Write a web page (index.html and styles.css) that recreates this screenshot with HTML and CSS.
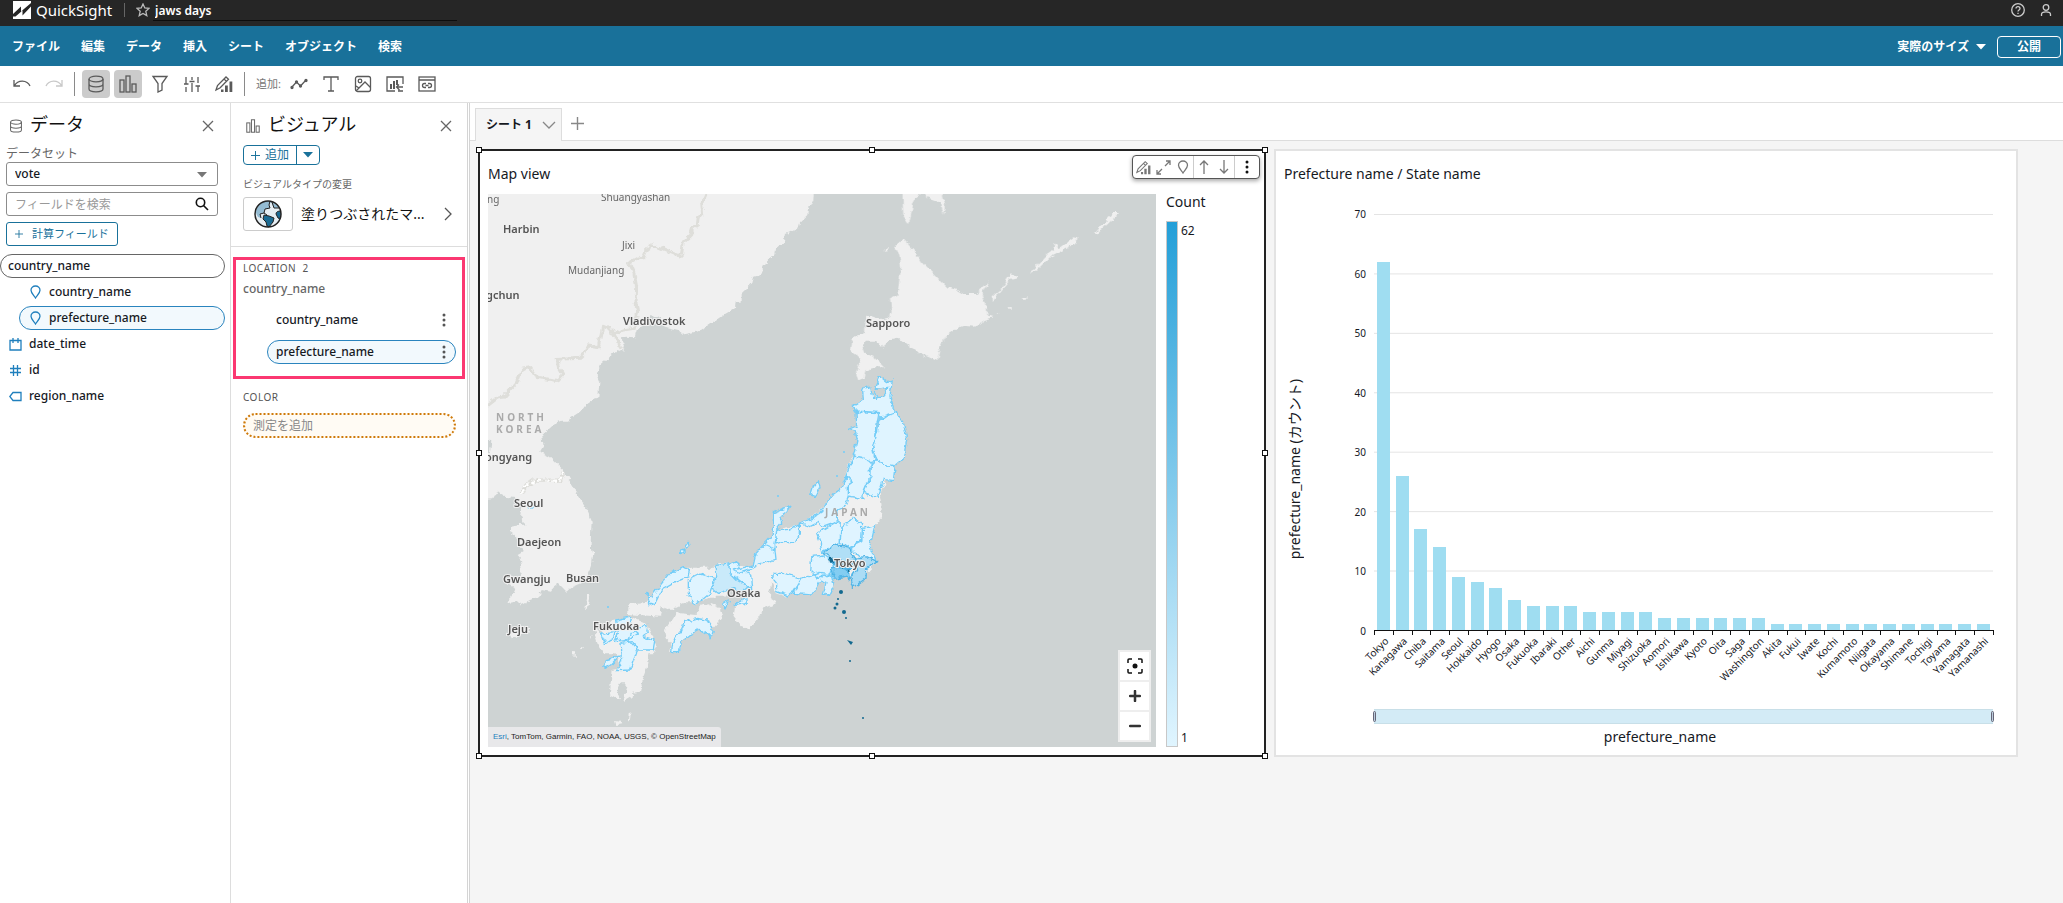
FILE: index.html
```html
<!DOCTYPE html>
<html lang="ja">
<head>
<meta charset="utf-8">
<meta name="viewport" content="width=device-width, initial-scale=1">
<title>QuickSight - jaws days</title>
<link rel="stylesheet" href="styles.css">
</head>
<body>
<svg class="defs" aria-hidden="true">
  <symbol id="i-db" viewBox="0 0 18 18"><ellipse cx="9" cy="4" rx="7" ry="2.8"/><path d="M2 4v10c0 1.500 3 2.800 7 2.800s7-1.300 7-2.800V4M2 9c0 1.500 3 2.800 7 2.800S16 10.500 16 9"/></symbol>
  <symbol id="i-bars" viewBox="0 0 18 18"><rect x="1" y="5" width="4" height="12"/><rect x="7" y="1" width="4" height="16"/><rect x="13" y="9" width="4" height="8"/></symbol>
  <symbol id="i-pencil" viewBox="0 0 18 18"><path d="M1 15l1.500-4.500L11 2l2.500 2.300-8.300 8.500zM9 4l2.500 2.400"/><path d="M6 14.500h2.500V17H6zM10 10.500h2.800V17H10zM14.500 6.500h2.800V17h-2.800z" fill="currentColor" stroke="none"/></symbol>
  <symbol id="i-pin" viewBox="0 0 12 14"><path d="M6 13C4.500 10.500 1.500 8 1.500 5.200a4.500 4.200 0 0 1 9 0C10.500 8 7.500 10.500 6 13z"/></symbol>
  <symbol id="i-close" viewBox="0 0 12 12"><path d="M1 1l10 10M11 1L1 11"/></symbol>
  <symbol id="i-plus" viewBox="0 0 12 12"><path d="M6 0v12M0 6h12"/></symbol>
  <symbol id="i-dots" viewBox="0 0 4 14"><g fill="currentColor" stroke="none"><circle cx="2" cy="2" r="1.500"/><circle cx="2" cy="7" r="1.500"/><circle cx="2" cy="12" r="1.500"/></g></symbol>
  <symbol id="i-caret" viewBox="0 0 10 6"><path d="M0 0h10L5 5.500z" fill="currentColor" stroke="none"/></symbol>
</svg>

<header class="topbar">
  <svg class="logo" viewBox="0 0 18 18"><rect width="18" height="18" fill="#fff"/><path d="M0 13L8 5.500v5L18 2v3.500L9.500 14.500V9.500L2.500 15.500H0z" fill="#262626"/></svg>
  <span class="brand">QuickSight</span>
  <span class="topbar-sep"></span>
  <button class="plain star" aria-label="お気に入り"><svg class="icon" viewBox="0 0 14 14" width="14" height="14"><path d="M7 1l1.800 4 4.200.4-3.200 2.900 1 4.300L7 10.400l-3.800 2.200 1-4.300L1 5.400 5.200 5z"/></svg></button>
  <label class="doc"><input type="text" value="jaws days" aria-label="分析名"></label>
  <div class="topbar-right">
    <button class="plain" aria-label="ヘルプ"><svg class="icon" viewBox="0 0 14 14" width="14" height="14"><circle cx="7" cy="7" r="6.300"/><path d="M5 5.600c0-2.600 4-2.600 4 0C9 7 7 7 7 8.500M7 9.700V11"/></svg></button>
    <button class="plain" aria-label="アカウント"><svg class="icon" viewBox="0 0 12 14" width="12" height="14"><circle cx="6" cy="4.500" r="2.800"/><path d="M1.500 13v-1.500c0-3.400 9-3.400 9 0V13"/></svg></button>
  </div>
</header>

<nav class="menubar">
  <button class="plain">ファイル</button><button class="plain">編集</button><button class="plain">データ</button><button class="plain">挿入</button><button class="plain">シート</button><button class="plain">オブジェクト</button><button class="plain">検索</button>
  <div class="menubar-right">
    <button class="plain zoomsize">実際のサイズ <svg width="10" height="6"><use href="#i-caret"/></svg></button>
    <button class="publish">公開</button>
  </div>
</nav>

<div class="toolbar">
  <button class="tool" aria-label="元に戻す"><svg class="icon" viewBox="0 0 18 18"><path d="M1 5v6h6M1.500 10.500C5 4.500 14 4.500 17 11"/></svg></button>
  <button class="tool off" aria-label="やり直す"><svg class="icon" viewBox="0 0 18 18"><path d="M17 5v6h-6M16.500 10.500C13 4.500 4 4.500 1 11"/></svg></button>
  <span class="tool-sep"></span>
  <button class="tool on" aria-label="データ"><svg class="icon"><use href="#i-db"/></svg></button>
  <button class="tool on" aria-label="ビジュアル"><svg class="icon"><use href="#i-bars"/></svg></button>
  <button class="tool" aria-label="フィルター"><svg class="icon" viewBox="0 0 18 18"><path d="M2 1.500h14l-5 7v6.500l-4 2V8.500z"/></svg></button>
  <button class="tool" aria-label="パラメータ"><svg class="icon" viewBox="0 0 18 18"><path d="M3 2v7M3 12v5M1 9h4.500M9 2v3M9 8v9M6.500 6.500h5M15 2v6M15 11v6M12.500 11H17"/></svg></button>
  <button class="tool" aria-label="プロパティ"><svg class="icon"><use href="#i-pencil"/></svg></button>
  <span class="tool-sep"></span>
  <span class="tool-label">追加:</span>
  <button class="tool" aria-label="ビジュアルを追加"><svg class="icon" viewBox="0 0 18 18"><path d="M2 12l4.500-5 4 4L16 5"/><g fill="currentColor"><circle cx="2" cy="12.500" r="1"/><circle cx="6.500" cy="7" r="1"/><circle cx="10.500" cy="11" r="1"/><circle cx="16" cy="5.500" r="1"/></g></svg></button>
  <button class="tool" aria-label="テキストを追加"><svg class="icon" viewBox="0 0 18 18"><path d="M2 5V2h14v3M9 2v14M6 16h6"/></svg></button>
  <button class="tool" aria-label="画像を追加"><svg class="icon" viewBox="0 0 18 18"><rect x="1.500" y="1.500" width="15" height="15" rx="2"/><circle cx="6" cy="6" r="1.800"/><path d="M2 16l9-9 5.500 5.500M2 11l3 2"/></svg></button>
  <button class="tool" aria-label="インサイトを追加"><svg class="icon" viewBox="0 0 18 18"><path d="M9 16H1V2h16v7M17 12h-6M13 9.500L10.500 12l3 3M12 16h5"/><path d="M4 9h2v5H4zM7 6h2v8H7zM10 5h2v5h-2z" fill="currentColor" stroke="none"/></svg></button>
  <button class="tool" aria-label="埋め込みを追加"><svg class="icon" viewBox="0 0 18 18"><rect x="1" y="2" width="16" height="14"/><path d="M1 5h16M8 8.500H6.500a2 2 0 0 0 0 4H8M10 8.500h1.500a2 2 0 0 1 0 4H10M7.500 10.500h3"/></svg></button>
</div>

<div class="workspace">
  <aside class="panel data-panel">
    <div class="panel-head">
      <svg class="icon" width="14" height="14"><use href="#i-db"/></svg><h2>データ</h2>
      <button class="plain close" aria-label="閉じる"><svg class="icon" width="12" height="12"><use href="#i-close"/></svg></button>
    </div>
    <div class="data-form">
      <label class="dataset" for="dataset">データセット</label>
      <div class="select-wrap"><select id="dataset"><option>vote</option></select><svg width="10" height="6"><use href="#i-caret"/></svg></div>
      <div class="search"><input type="text" placeholder="フィールドを検索" aria-label="フィールドを検索"><svg class="icon" viewBox="0 0 14 14" width="14" height="14"><circle cx="5.500" cy="5.500" r="4.200"/><path d="M8.500 8.500L13 13"/></svg></div>
      <button class="calc"><svg class="icon" width="8" height="8"><use href="#i-plus"/></svg>計算フィールド</button>
    </div>
    <ul class="fields">
      <li class="group">country_name</li>
      <li class="child"><svg class="icon" width="12" height="14"><use href="#i-pin"/></svg>country_name</li>
      <li class="child selected"><svg class="icon" width="12" height="14"><use href="#i-pin"/></svg>prefecture_name</li>
      <li><svg class="icon" viewBox="0 0 13 13" width="13" height="13"><path d="M1 2.500V12h11V2.500zM4 0v5M9 0v5"/></svg>date_time</li>
      <li><svg class="icon" viewBox="0 0 13 13" width="13" height="13"><path d="M4.500 1v11M8.500 1v11M1 4.500h11M1 8.500h11"/></svg>id</li>
      <li><svg class="icon" viewBox="0 0 13 13" width="13" height="13"><path d="M4 2.500h8v8H4L.8 6.500z"/></svg>region_name</li>
    </ul>
  </aside>

  <aside class="panel visual-panel">
    <div class="visual-top">
      <div class="panel-head">
        <svg class="icon" width="14" height="14"><use href="#i-bars"/></svg><h2>ビジュアル</h2>
        <button class="plain close" aria-label="閉じる"><svg class="icon" width="12" height="12"><use href="#i-close"/></svg></button>
      </div>
      <div class="split"><button><svg class="icon" width="9" height="9"><use href="#i-plus"/></svg>追加</button><button aria-label="その他の追加"><svg width="10" height="6"><use href="#i-caret"/></svg></button></div>
      <p class="hint">ビジュアルタイプの変更</p>
      <button class="plain vtype">
        <span class="thumb"><svg viewBox="0 0 28 28" width="28" height="28"><circle cx="14" cy="14" r="13" fill="#e6eef3"/><path d="M4 6Q8 1 14 1l3 1-2 3 1 3-5 1-1 4-4 1 1 4-3-1Q0 12 4 6zM17 2q6 1 8 6l-5 0z" fill="#94bcd3"/><path d="M10 15l5 1 5 2-1 4-4 5-2-1-1-4-3-3zM27 11q-5 0-5 3l2 4 2 1q1-4 1-8z" fill="#1b6b93"/><path d="M10 15l5 1 5 2-1 4-4 5-2-1-1-4-3-3zM27 11q-5 0-5 3l2 4 2 1M16 1l-1 4 1 3-5 1-1 4-4 1 1 4M18 2l2 6h5M10 13l3 2" fill="none" stroke="#222"/><circle cx="14" cy="14" r="13" fill="none" stroke="#222" stroke-width="1.500"/></svg></span>
        <span class="vtype-name">塗りつぶされたマ...</span>
        <svg class="icon" viewBox="0 0 8 14" width="8" height="14"><path d="M1 1l6 6-6 6"/></svg>
      </button>
    </div>
    <section class="well location">
      <h3>LOCATION&nbsp; 2</h3>
      <p>country_name</p>
      <div class="pill bare">country_name<button class="plain" aria-label="メニュー"><svg width="4" height="14"><use href="#i-dots"/></svg></button></div>
      <div class="pill">prefecture_name<button class="plain" aria-label="メニュー"><svg width="4" height="14"><use href="#i-dots"/></svg></button></div>
    </section>
    <section class="well color">
      <h3>COLOR</h3>
      <button class="drop">測定を追加</button>
    </section>
  </aside>

  <main class="sheet">
    <div class="tabs">
      <button class="tab">シート 1 <svg class="icon" viewBox="0 0 14 8" width="14" height="8"><path d="M1 1l6 6 6-6"/></svg></button>
      <button class="plain addtab" aria-label="シートを追加"><svg class="icon" width="13" height="13"><use href="#i-plus"/></svg></button>
    </div>
    <div class="canvas">
      <section class="card map-card">
        <h4>Map view</h4>
        <div class="map-body">
          <div class="map">
            <svg class="map-art" viewBox="488 194 668 553" preserveAspectRatio="xMidYMid slice" role="img" aria-label="Map view">
              <defs>
                <filter id="rough" filterUnits="userSpaceOnUse" x="480" y="190" width="690" height="570"><feTurbulence type="fractalNoise" baseFrequency="0.16" numOctaves="3" seed="4"/><feDisplacementMap in="SourceGraphic" scale="6" xChannelSelector="R" yChannelSelector="G"/></filter>
              </defs>
              <rect x="480" y="190" width="690" height="570" fill="#ced3d3"/>
              <g filter="url(#rough)">
                <g transform="translate(470 100) scale(.33333)">
                  <path class="land" d="M30 260H1032L1030 300 1017 325 1015 345 990 370 985 385 948 402 945 425 915 450 912 465 885 490 870 525 848 532 843 550 828 567 815 580 815 605 797 605 795 625 760 645 690 693 640 703 625 690 585 680 580 665 570 650 540 645 540 655 520 680 500 690 495 712 470 710 455 712 465 735 460 755 440 750 435 755 415 775 392 795 380 825 388 845 385 893 370 897 345 915 330 935 300 955 295 965H30z"/>
                  <path class="frontier" d="M712 270L695 310 698 345 685 350 682 375 668 385 662 405 640 425 635 460 628 467 545 432 540 445 528 455 522 470 500 475 478 487 492 520 500 560 498 610 503 635 490 685 460 690 430 705 458 748M440 720L420 685 398 680 385 740 355 735 345 760 330 775 262 778 265 800 280 825 265 842 200 832 180 803 155 808 140 850 105 888 85 890 40 925"/>
                </g>
                <g transform="translate(840 180) scale(.33333)">
                  <path class="land" d="M190 178L215 205 250 250 300 300 320 320 350 330 370 342H410L448 303 428 345 440 380 442 405 462 412 430 420 420 435 400 440 370 437 345 447 318 468 300 500 292 543 230 515 190 482 170 476 145 482 122 504 105 482H80L68 500 75 520 100 530 132 562H95L78 575 75 590 55 598 48 580 60 545 50 525 32 512 38 472 75 460 78 405H90L125 418 150 412 155 395 150 355 172 345 183 260 178 225 168 205 175 188zM187 30H242L220 70 210 120 202 128 190 110zM253 30H305L315 75 308 105 300 65 260 52zM455 352L480 330 512 283 537 293 510 300 485 330 460 362zM568 283L620 225 640 210 643 188 655 205 700 172 712 175 710 190 655 220 630 232 590 270zM760 164L820 99H837L770 164zM545 355l20-6-10 12zM134 206l10-1 2 9-10 2zM503 385l9-1v5h-8zM470 403l12-4-8 6z"/>
                </g>
                <g transform="translate(470 420) scale(.33333)">
                  <path class="land" d="M30-10H300L250 15 217 45 220 75 208 95 240 110 280 150 290 170 320 220 350 265 365 300 362 370 370 400 365 440 355 462 345 485 300 505 290 515 265 490 250 500 240 515 215 510 205 530 180 540 150 555 140 545 115 550 125 530 135 520 130 500 110 490 145 480 155 460 150 440 160 425 143 405 160 395 145 375 140 345 120 330V320L148 315 150 305 170 322 150 285 155 265 140 235 105 230 82 212 70 235 30 238z"/>
                  <path class="land" d="M352 525h12l-12 45-6-2zM118 640L150 620 178 625 175 640 125 655zM306 696l12 1v10l-12-1zM438 903l12 2 4 8-12 2zM476 880l6-3-2 22-6 2zM330 685l10-8-6 12zM360 650l6-4-2 8z"/>
                  <path class="sea" d="M30 60l34 3-4 35-30 5z"/>
                  <path d="M155 222L165 200 190 182H270L282 155" fill="none" stroke="#dcdcd8" stroke-width="13"/>
                  <path d="M155 222L165 200 190 182H270L282 155" fill="none" stroke="#fff" stroke-width="7" stroke-dasharray="16 6"/>
                  <path class="land" d="M372 620L390 640 430 600 485 590 530 610 545 640 560 680 548 700H535L530 745 520 770 510 815 490 818 488 830 460 847 465 820 470 790H450L440 810 450 838 425 825 420 820 425 750 450 745 440 700H400L382 670 375 645z"/>
                  <path class="land" d="M585 630L610 590 630 580 680 585 685 560 715 550 750 565 757 595 730 625 720 650 690 628 660 640 635 665 630 695H597L605 670 590 655z"/>
                  <path class="land" d="M475 555L530 548 560 510 600 475 650 443H735L750 432 800 430 840 445 870 430 860 400 890 370 915 345 935 325 985 315 1050 275 1080 230 1115 205 1125 165 1145 110 1270 110 1230 228 1235 260 1232 300 1215 320 1200 380 1220 425 1190 460 1150 500 1140 470 1110 465 1085 475 1090 500 1075 530 1060 520 1065 490 1050 485 1025 525 970 520 950 530 920 520 905 490 897 520 900 535 922 548 880 565 870 590 840 628 815 622 790 590 795 560 830 545 835 520 780 510 760 530H720L680 550H640L600 570 575 560 570 590 475 582z"/>
                  <g class="pref">
                    <path d="M530 520L545 528 600 460 640 440 658 450 655 470 620 485 575 510 555 550 540 555zM655 480L690 462 735 475 720 520 690 545 668 550 655 520zM780 432L800 425 805 445 845 465 848 510 820 490 780 460zM758 552L778 540 765 567zM790 557L830 530 832 550z"/>
                    <path d="M735 440L780 432V460L800 480 835 500 815 515 790 505 745 520 725 505 740 470z" fill="#c9eafa"/>
                    <path d="M605 695L610 660 635 630 645 605 680 595 710 600 728 625 722 650 690 628 660 645 635 665 628 695z"/>
                    <path d="M440 600L485 590 480 620 505 640 470 665 435 660 445 640zM390 640L435 635 430 655 405 672zM480 640L530 612 535 640 520 650 555 660 550 690 500 690 475 660zM450 670L490 665 500 695 480 750 440 752 455 720zM405 720L450 708 425 735 405 745z"/>
                    <path d="M646 373l12-3 2 10-10 4zM630 391l12-4v10l-10 4z"/>
                    <path d="M172 250l14-8 6 10-14 12z" opacity=".7"/>
                  </g>
                </g>
                <g class="pref" transform="translate(740 360) scale(.33333)">
                  <path d="M345 153L340 138 370 120 368 90 375 78 392 85 398 115H408L404 95 415 112H432L443 82 412 88 405 78 418 48 440 65 457 60 450 110 462 148 470 158 420 175 417 158z"/>
                  <path d="M348 155L417 158 410 200 408 230 398 260 405 300 390 305 340 288 352 240 345 210 325 205 350 195z"/>
                  <path d="M470 160L490 185 500 240 490 295 460 320 445 318 410 300 398 260 412 215 417 178z"/>
                  <path d="M395 308L410 302 445 318 465 320 460 362 430 358 412 412 372 397 392 350z"/>
                  <path d="M340 288L365 292 390 305 392 350 372 395 368 415 325 408V375L338 365 318 345z"/>
                  <path d="M318 345L338 365 325 375V410L315 440 290 450 295 495 272 490 245 500 235 487 210 500 180 490 215 475 245 455 270 410 305 385z"/>
                  <path d="M100 458L150 438 140 455 120 470 125 490 110 510 105 570 70 555 100 520zM110 510L150 508 178 492V525L165 545H125L105 553zM70 555L105 570 108 598 60 612 30 630 0 640-20 630 40 615 48 580z"/>
                  <path d="M230 520L290 485 303 500 300 550 245 575 240 545zM305 500L345 475 368 490 365 540 325 562 300 550zM368 505L405 497 390 560 410 605 360 590 330 562 365 545z"/>
                  <path d="M215 590L250 585 280 610 270 640 235 655 212 635zM160 700L185 655 240 640 275 645 282 680 268 710 250 700 258 670 240 663 215 705zM100 640H130L185 655 160 695 145 708 110 695V670L98 655z"/>
                  <path d="M235 362L240 380 225 410 212 405 220 380z"/>
                  <path class="mid" d="M250 578L285 555 330 565 345 595 335 612 280 600z" fill="#b0dff6"/>
                  <path class="mid" d="M340 595L380 590 413 605 380 625 378 655 340 682 332 655 350 630z" fill="#abdcf5"/>
                  <path class="mid" d="M275 640V622L325 625 328 660 315 648 285 655z" fill="#83cdf2"/>
                  <path class="mid" d="M268 592L285 602 335 612 330 630 300 622 275 610z" fill="#52b0e0"/>
                  <path d="M266 592l10-2 6 16-12 2zM304 618l6 4-2 6zM326 628l8 4-6 6z" fill="#12698f" stroke="none"/>
                </g>
              </g>
              <g fill="#12698f">
                <circle cx="841" cy="592" r="2"/><circle cx="838" cy="599" r="1"/><circle cx="837" cy="604" r="1.500"/><circle cx="835" cy="608" r="1.500"/><circle cx="844" cy="612" r="2"/><circle cx="846" cy="618" r="1"/><path d="M847 640l6 2-2 3z"/><circle cx="850" cy="661" r="1"/><circle cx="863" cy="718" r="1"/>
              </g>
              <g fill="#73cdf8"><circle cx="844" cy="452" r="1"/><circle cx="837" cy="476" r="1"/><circle cx="778" cy="496" r="1"/><circle cx="608" cy="607" r="1"/></g>
              <g class="city minor">
                <text x="487" y="203">ng</text><text x="601" y="201">Shuangyashan</text><text x="622" y="249">Jixi</text><text x="568" y="274">Mudanjiang</text>
              </g>
              <g class="city">
                <text x="503" y="233">Harbin</text><text x="486" y="299">gchun</text><text x="623" y="325">Vladivostok</text><text x="866" y="327">Sapporo</text><text x="485" y="461">ongyang</text><text x="514" y="507">Seoul</text><text x="517" y="546">Daejeon</text><text x="503" y="583">Gwangju</text><text x="566" y="582">Busan</text><text x="508" y="633">Jeju</text><text x="593" y="630">Fukuoka</text><text x="727" y="597">Osaka</text><text x="834" y="567">Tokyo</text>
              </g>
              <g class="country"><text x="496" y="421">NORTH</text><text x="496" y="433">KOREA</text><text x="825" y="516">JAPAN</text></g>
            </svg>
            <p class="credit"><a href="#esri">Esri</a>, TomTom, Garmin, FAO, NOAA, USGS, © OpenStreetMap</p>
            <div class="zoom">
              <button aria-label="全体表示"><svg viewBox="0 0 16 16" width="16" height="16"><path d="M1 5V2q0-1 1-1h3M11 1h3q1 0 1 1v3M15 11v3q0 1-1 1h-3M5 15H2q-1 0-1-1v-3" fill="none" stroke="#111" stroke-width="1.500"/><circle cx="8" cy="8" r="2.500" fill="#111"/></svg></button>
              <button aria-label="拡大"><svg viewBox="0 0 12 12" width="12" height="12"><path d="M6 1v10M1 6h10" stroke="#333" stroke-width="2.500" stroke-linecap="round"/></svg></button>
              <button aria-label="縮小"><svg viewBox="0 0 12 12" width="12" height="12"><path d="M1 6h10" stroke="#333" stroke-width="2.500" stroke-linecap="round"/></svg></button>
            </div>
          </div>
          <div class="legend">
            <p>Count</p>
            <div class="scale"><span class="ramp"></span><div class="ends"><span>62</span><span>1</span></div></div>
          </div>
        </div>
        <div class="card-tools">
          <button aria-label="書式設定"><svg class="icon" width="15" height="15"><use href="#i-pencil"/></svg></button>
          <button aria-label="最大化"><svg class="icon" viewBox="0 0 15 15" width="15" height="15"><path d="M9 6l5-5M10 1h4v4M6 9l-5 5M1 10v4h4"/></svg></button>
          <button aria-label="地図"><svg class="icon" width="12" height="14"><use href="#i-pin"/></svg></button>
          <button class="ruled" aria-label="上へ"><svg class="icon" viewBox="0 0 10 14" width="10" height="14"><path d="M5 14V1M1 5l4-4 4 4"/></svg></button>
          <button aria-label="下へ"><svg class="icon" viewBox="0 0 10 14" width="10" height="14"><path d="M5 0v13M1 9l4 4 4-4"/></svg></button>
          <button class="ruled dark" aria-label="メニュー"><svg width="4" height="14"><use href="#i-dots"/></svg></button>
        </div>
        <i class="grip tl"></i><i class="grip tc"></i><i class="grip tr"></i><i class="grip ml"></i><i class="grip mr"></i><i class="grip bl"></i><i class="grip bc"></i><i class="grip br"></i>
      </section>

      <section class="card chart-card">
        <h4>Prefecture name / State name</h4>
        <div class="chart">
          <div class="ytitle"><span>prefecture_name (カウント)</span></div>
          <div class="chart-main">
            <div class="plot-row">
              <div class="yaxis"><span>70</span><span>60</span><span>50</span><span>40</span><span>30</span><span>20</span><span>10</span><span>0</span></div>
              <ul class="plot">
                <li><b style="height:88.57%"></b><span>Tokyo</span></li>
                <li><b style="height:37.14%"></b><span>Kanagawa</span></li>
                <li><b style="height:24.29%"></b><span>Chiba</span></li>
                <li><b style="height:20%"></b><span>Saitama</span></li>
                <li><b style="height:12.86%"></b><span>Seoul</span></li>
                <li><b style="height:11.43%"></b><span>Hokkaido</span></li>
                <li><b style="height:10%"></b><span>Hyogo</span></li>
                <li><b style="height:7.14%"></b><span>Osaka</span></li>
                <li><b style="height:5.71%"></b><span>Fukuoka</span></li>
                <li><b style="height:5.71%"></b><span>Ibaraki</span></li>
                <li><b style="height:5.71%"></b><span>Other</span></li>
                <li><b style="height:4.29%"></b><span>Aichi</span></li>
                <li><b style="height:4.29%"></b><span>Gunma</span></li>
                <li><b style="height:4.29%"></b><span>Miyagi</span></li>
                <li><b style="height:4.29%"></b><span>Shizuoka</span></li>
                <li><b style="height:2.86%"></b><span>Aomori</span></li>
                <li><b style="height:2.86%"></b><span>Ishikawa</span></li>
                <li><b style="height:2.86%"></b><span>Kyoto</span></li>
                <li><b style="height:2.86%"></b><span>Oita</span></li>
                <li><b style="height:2.86%"></b><span>Saga</span></li>
                <li><b style="height:2.86%"></b><span>Washington</span></li>
                <li><b style="height:1.43%"></b><span>Akita</span></li>
                <li><b style="height:1.43%"></b><span>Fukui</span></li>
                <li><b style="height:1.43%"></b><span>Iwate</span></li>
                <li><b style="height:1.43%"></b><span>Kochi</span></li>
                <li><b style="height:1.43%"></b><span>Kumamoto</span></li>
                <li><b style="height:1.43%"></b><span>Niigata</span></li>
                <li><b style="height:1.43%"></b><span>Okayama</span></li>
                <li><b style="height:1.43%"></b><span>Shimane</span></li>
                <li><b style="height:1.43%"></b><span>Tochigi</span></li>
                <li><b style="height:1.43%"></b><span>Toyama</span></li>
                <li><b style="height:1.43%"></b><span>Yamagata</span></li>
                <li><b style="height:1.43%"></b><span>Yamanashi</span></li>
              </ul>
            </div>
            <div class="brush"><i></i><i></i></div>
            <p class="xtitle">prefecture_name</p>
          </div>
        </div>
      </section>
    </div>
  </main>
</div>
</body>
</html>
```
FILE: styles.css
```css
* { box-sizing: border-box; }
body { margin: 0; min-height: 100vh; display: flex; flex-direction: column; background: #fff; color: #16191f; font: 500 12px/16px "Noto Sans", "Noto Sans CJK JP", sans-serif; }
h2, h3, h4, p, ul { margin: 0; padding: 0; font-weight: inherit; }
ul { list-style: none; }
button, input, select { font: inherit; color: inherit; }
button { cursor: pointer; }
svg { display: block; flex: none; }
.defs { position: absolute; width: 0; height: 0; }
.icon { fill: none; stroke: currentColor; stroke-width: 1.3; }
.plain { border: 0; background: none; padding: 0; }

.topbar { height: 26px; display: flex; align-items: flex-start; background: #262626; color: #fff; padding: 0 8px 0 13px; overflow: hidden; }
.logo { width: 18px; height: 18px; margin-top: 1px; }
.brand { font-size: 15px; font-weight: 400; line-height: 20px; margin-left: 5px; }
.topbar-sep { width: 1px; height: 14px; margin: 3px 11px 0 12px; background: #666; }
.star { color: #bbb; padding-top: 3px; }
.doc { flex: 0 1 304px; margin-left: 3px; border-bottom: 1px solid #0d0d0d; }
.doc input { display: block; width: 100%; height: 20px; border: 0; padding: 0 2px; background: none; font-weight: 600; }
.topbar-right { display: flex; gap: 15px; margin-left: auto; padding: 3px 3px 0 0; color: #ccc; }

.menubar { height: 40px; display: flex; align-items: center; gap: 21px; padding: 1px 2px 0 12px; background: #19719a; color: #fff; font-weight: 600; }
.menubar-right { display: flex; align-items: center; gap: 11px; margin-left: auto; }
.zoomsize { display: flex; align-items: center; gap: 7px; }
.publish { width: 64px; height: 22px; border: 1px solid #fff; border-radius: 4px; background: none; padding: 0; line-height: 18px; }

.toolbar { height: 37px; display: flex; align-items: center; gap: 4px; padding: 0 8px; border-bottom: 1px solid #e0e0e0; color: #545b64; }
.tool { width: 28px; height: 28px; border: 0; border-radius: 4px; background: none; padding: 5px; color: #5a5a5a; }
.tool .icon { width: 18px; height: 18px; }
.tool.on { background: #cbcbcb; }
.tool.off { color: #c8c8c8; }
.tool-sep { width: 1px; height: 24px; margin: 0 3px 0 2px; background: #8a8a8a; }
.tool-label { width: 25px; margin-left: 4px; font-size: 11px; font-weight: 400; color: #777; white-space: nowrap; }

.workspace { flex: 1; display: flex; }
.panel { flex: none; border-right: 1px solid #ddd; }
.panel-head { display: flex; align-items: center; height: 37px; padding-top: 9px; color: #666; }
.panel-head h2 { font-size: 18px; font-weight: 400; line-height: 24px; margin: -4px 0 0 7px; color: #111; }
.close { margin-left: auto; }
.data-panel { width: 231px; }
.data-panel .panel-head { padding-left: 9px; padding-right: 16px; }
.data-form { display: flex; flex-direction: column; align-items: flex-start; padding: 5px 12px 0 6px; font-weight: 400; }
.dataset { color: #666; line-height: 17px; }
.select-wrap, .search { position: relative; width: 100%; height: 24px; margin-bottom: 6px; }
.select-wrap select, .search input { display: block; width: 100%; height: 24px; border: 1px solid #8c8c8c; border-radius: 3px; background: #fff; padding: 0 8px; appearance: none; font-weight: 500; }
.search input { font-weight: 400; }
.search input::placeholder { color: #999; opacity: 1; }
.select-wrap svg { position: absolute; right: 11px; top: 10px; color: #777; }
.search svg { position: absolute; right: 9px; top: 5px; color: #111; stroke-width: 1.6; }
.calc { display: flex; align-items: center; gap: 9px; height: 24px; padding: 0 8px; border: 1px solid #19719a; border-radius: 3px; background: #fff; color: #19719a; font-size: 11px; }
.fields { padding: 8px 5px 0 0; }
.fields li { height: 24px; display: flex; align-items: center; gap: 7px; padding-left: 9px; margin-bottom: 2px; color: #16191f; }
.fields .icon { color: #1f7fbd; width: 13px; }
.fields .group { border: 1px solid #666; border-radius: 12px; padding-left: 7px; }
.fields .child { margin-left: 19px; padding-left: 9px; border: 1px solid transparent; border-radius: 12px; }
.fields .selected { border-color: #2a84be; background: #f2f9fd; }

.visual-panel { width: 239px; border-right: 3px double #d4d4d4; }
.visual-top { padding: 0 15px 15px 12px; border-bottom: 1px solid #ddd; }
.visual-top .panel-head { padding-left: 3px; }
.visual-top h2 { margin-left: 8px; }
.split { display: flex; width: 77px; height: 20px; margin-top: 5px; border: 1px solid #19719a; border-radius: 4px; color: #19719a; }
.split button { display: flex; align-items: center; gap: 5px; border: 0; background: none; padding: 0 7px; font-weight: 400; line-height: 16px; }
.split button + button { border-left: 1px solid #19719a; padding: 0 6px; }
.hint { margin: 11px 0 5px; font-size: 10px; font-weight: 400; color: #666; }
.vtype { display: flex; align-items: center; width: 100%; color: #555; }
.thumb { display: flex; justify-content: center; align-items: center; width: 50px; height: 34px; border: 1px solid #ccc; border-radius: 3px; }
.vtype-name { margin: 0 auto 0 8px; font-size: 14px; font-weight: 400; color: #111; white-space: nowrap; }
.well h3 { font-size: 10px; font-weight: 400; line-height: 14px; letter-spacing: .5px; color: #555; }
.location { margin: 10px 2px 0 2px; padding: 1px 6px 12px 7px; border: 3px solid #fb3871; }
.location p { margin: 6px 0 11px; color: #666; }
.pill { display: flex; justify-content: space-between; align-items: center; height: 24px; margin-left: 24px; padding: 0 9px 0 8px; border: 1px solid #2a84be; border-radius: 12px; background: #f2f9fd; }
.pill button { color: #555; }
.pill.bare { margin-bottom: 8px; border-color: transparent; background: none; }
.color { padding: 11px 11px 0 12px; }
.drop { width: 100%; height: 25px; margin-top: 9px; padding: 0 8px; border: 2px dotted #cf7a0a; border-radius: 13px; background: #fffbf4; color: #888; font-weight: 400; line-height: 16px; text-align: left; }

.sheet { flex: 1; min-width: 0; background: #f5f5f5; }
.tabs { display: flex; height: 38px; padding: 5px 5px 0; border-bottom: 1px solid #ddd; background: #fff; }
.tab { display: flex; align-items: center; gap: 10px; height: 33px; width: 87px; padding: 0 0 0 10px; border: 1px solid #ddd; border-bottom: 0; background: #f5f5f5; font-weight: 700; white-space: nowrap; }
.tab .icon, .addtab { color: #888; }
.addtab { margin-left: 9px; padding-bottom: 1px; }
.canvas { display: grid; grid-template-columns: 788fr 744fr; gap: 8px; padding: 8px 45px 8px 8px; }
.card { position: relative; min-width: 0; border: 2px solid #e3e3e3; background: #fff; padding: 0 8px 8px; display: flex; flex-direction: column; }
.card h4 { height: 43px; padding-top: 12px; font-size: 14px; font-weight: 400; line-height: 22px; }
.map-card { border-color: #222; padding-right: 9px; }
.map-body { display: flex; gap: 10px; }
.map { position: relative; flex: 1; min-width: 0; overflow: hidden; }
.map-art { width: 100%; height: auto; aspect-ratio: 668 / 553; }
.land { fill: #f0f0f0; }
.sea { fill: #ced3d3; }
.frontier { fill: none; stroke: #dededa; stroke-width: 9; }
.pref { fill: #dff4ff; stroke: #73cdf8; stroke-width: 4; stroke-linejoin: round; }
.mid { stroke: #4fb4e6; }
.city { font-size: 11px; font-weight: 600; fill: #555; stroke: #f0f0f0; stroke-width: 2; paint-order: stroke; }
.city.minor { font-size: 10px; font-weight: 400; fill: #666; }
.country { font-size: 10px; font-weight: 700; letter-spacing: 3px; fill: #aaa; }
.credit { position: absolute; left: 0; bottom: 0; height: 20px; padding: 0 5px; border-top-right-radius: 3px; background: #e8e8ea; font: 8px/20px "Liberation Sans", sans-serif; color: #222; white-space: nowrap; }
.credit a { color: #1f7fbd; text-decoration: none; }
.zoom { position: absolute; right: 5px; bottom: 5px; width: 33px; display: grid; gap: 2px; padding: 2px; background: #eee; }
.zoom button { display: grid; place-items: center; height: 28px; padding: 0; border: 0; background: #fff; }
.legend { width: 89px; display: flex; flex-direction: column; }
.legend p { font-size: 14px; font-weight: 400; line-height: 16px; margin-bottom: 11px; }
.scale { flex: 1; display: flex; gap: 3px; }
.ramp { width: 12px; border: 1px solid #c8c8c8; background: linear-gradient(#249fd8, #e0f5ff); }
.ends { display: flex; flex-direction: column; justify-content: space-between; padding: 2px 0 1px; font-weight: 400; }
.card-tools { position: absolute; right: 4px; top: 4px; display: flex; height: 24px; border: 1px solid #555; border-radius: 4px; background: #fff; box-shadow: 0 2px 4px rgba(0, 0, 0, .35); }
.card-tools button { width: 20px; display: grid; place-items: center; padding: 0; border: 0; background: none; color: #777; }
.card-tools .ruled { width: 21px; border-left: 1px solid #ccc; }
.card-tools .dark { width: 25px; color: #111; }
.grip { position: absolute; width: 6px; height: 6px; border: 1px solid #111; background: #fff; }
.tl, .ml, .bl { left: -4px; }
.tr, .mr, .br { right: -4px; }
.tl, .tc, .tr { top: -4px; }
.bl, .bc, .br { bottom: -4px; }
.tc, .bc { left: calc(50% - 3px); }
.ml, .mr { top: calc(50% - 3px); }

.chart { flex: 1; display: flex; padding-right: 15px; }
.ytitle { width: 43px; display: flex; align-items: center; padding-bottom: 2px; }
.ytitle span { writing-mode: vertical-rl; text-orientation: sideways; transform: rotate(180deg); font-size: 14px; line-height: 22px; font-weight: 400; white-space: nowrap; }
.chart-main { flex: 1; min-width: 0; display: flex; flex-direction: column; padding-top: 20px; }
.plot-row { display: flex; flex: 1; margin-bottom: 78px; }
.yaxis { width: 39px; display: flex; flex-direction: column; justify-content: space-between; margin: -7px 8px -7px 0; font-size: 10px; line-height: 14px; font-weight: 400; text-align: right; }
.plot { flex: 1; display: flex; border-bottom: 1px solid #111; background: linear-gradient(#e4e4e4 1px, transparent 1px) 0 0 / 100% 14.2857%; }
.plot li { position: relative; flex: 1; display: flex; align-items: flex-end; justify-content: center; }
.plot li::before, .plot li:last-child::after { content: ""; position: absolute; left: 0; top: 100%; width: 1px; height: 5px; background: #111; }
.plot li:last-child::after { left: 100%; }
.plot b { width: 70%; background: #9fddf1; }
.plot span { position: absolute; right: 35%; top: calc(100% + 3px); font-size: 10px; line-height: 12px; font-weight: 400; white-space: nowrap; transform: rotate(-45deg); transform-origin: 100% 50%; }
.brush { height: 15px; margin-left: 47px; display: flex; justify-content: space-between; background: #d3ebf6; border-top: 1px solid #c8dfe8; border-bottom: 1px solid #c8dfe8; }
.brush i { width: 3px; height: 11px; margin: 1px -1px; border: 1px solid #667; border-radius: 2px; background: #bcd; }
.xtitle { margin: 4px 0 1px; font-size: 14px; font-weight: 400; line-height: 18px; text-align: center; }
```
